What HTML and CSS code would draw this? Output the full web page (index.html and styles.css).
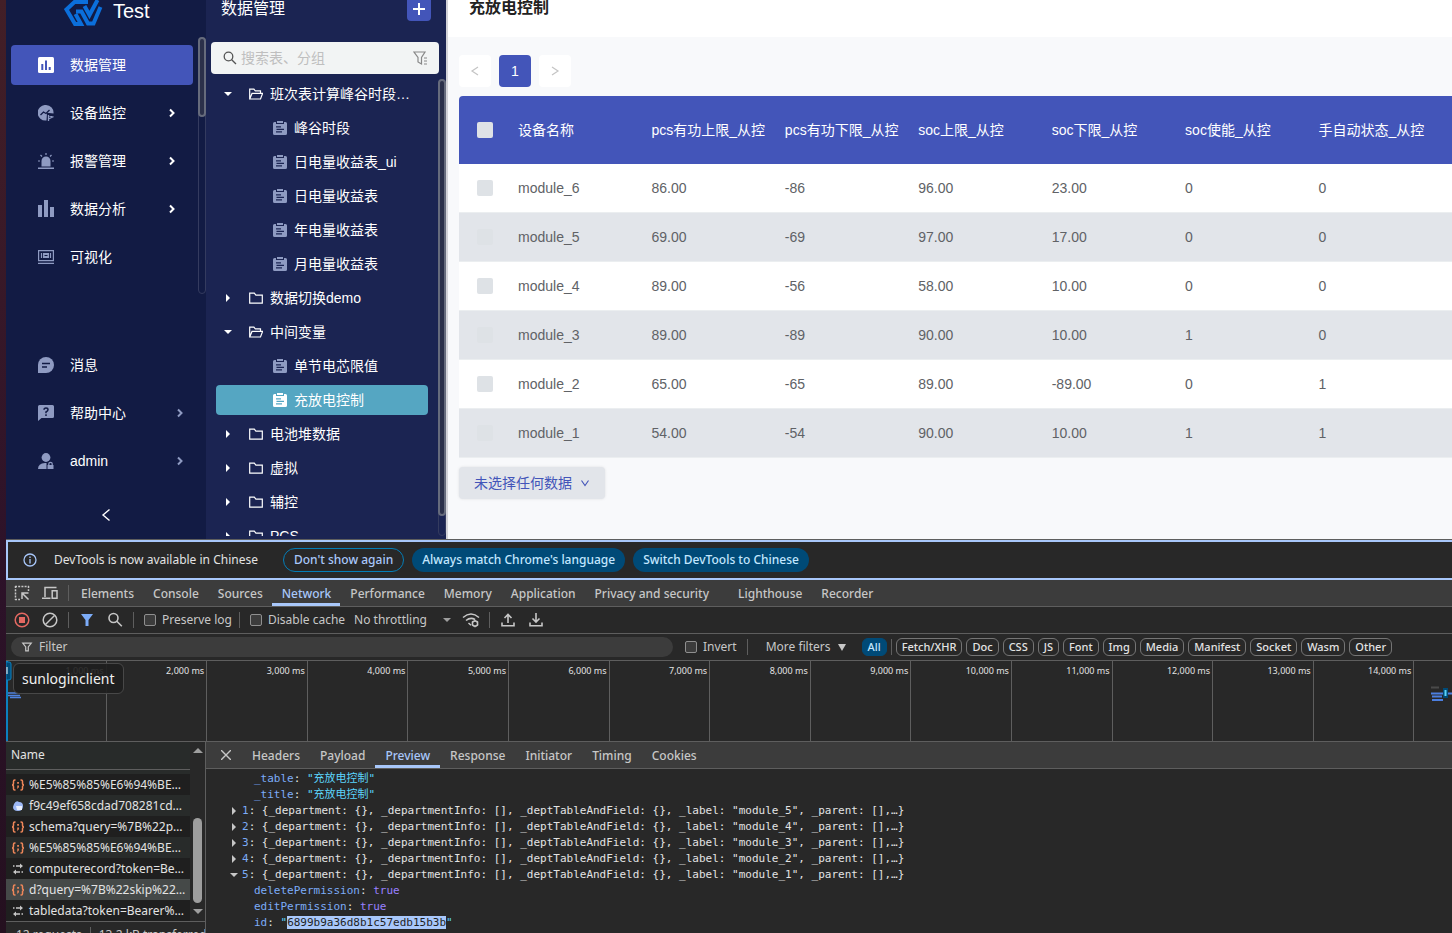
FILE: index.html
```html
<!DOCTYPE html>
<html lang="zh-CN">
<head>
    <meta charset="UTF-8">
    <title>充放电控制</title>
    <link rel="stylesheet" href="styles.css">
</head>
<body>
    <!-- 图标 -->
    <svg class="sprite" aria-hidden="true">
        <symbol id="i-folder" viewBox="0 0 14 14"><path d="M.7 2.2h4.6l1.600 1.900h6.400v8H.7z" fill="none" stroke="currentColor" stroke-width="1.200"/></symbol>
        <symbol id="i-open" viewBox="0 0 14 14"><path d="M.7 12V2.200h4.200l1.400 1.700h5.200v2.300M.7 12l2.300-5.600h10.600L11.500 12z" fill="none" stroke="currentColor" stroke-width="1.200"/></symbol>
        <symbol id="i-sheet" viewBox="0 0 14 14"><path fill="currentColor" fill-rule="evenodd" d="M1.500 1H3v2h8V1h1.500a1.500 1.500 0 0 1 1.500 1.500v10a1.500 1.500 0 0 1-1.500 1.500h-11A1.500 1.500 0 0 1 0 12.500v-10A1.500 1.500 0 0 1 1.500 1zM3 5.200v1.200h5V5.200zM3.500 7.800V9H11V7.800zM3 10.300v1.200h6v-1.200zM4 0h6v2H4z"/></symbol>
        <symbol id="i-right" viewBox="0 0 8 10"><path d="M2 1.500 5.500 5 2 8.500" fill="none" stroke="currentColor" stroke-width="2"/></symbol>
        <symbol id="i-caret" viewBox="0 0 12 12"><path d="M4 2v8l4-4z" fill="currentColor"/></symbol>
        <symbol id="i-caret-down" viewBox="0 0 12 12"><path d="M2 4h8L6 8z" fill="currentColor"/></symbol>
        <symbol id="i-json" viewBox="0 0 14 12"><path d="M4.500 1H3.800Q2.500 1 2.500 2.300V4Q2.500 6 1 6q1.500 0 1.500 2v1.700Q2.500 11 3.800 11h.7M9.500 1h.7q1.300 0 1.300 1.300V4q0 2 1.500 2-1.500 0-1.500 2v1.700q0 1.300-1.300 1.300h-.7" fill="none" stroke="#f0875a" stroke-width="1.500"/><path d="M6.200 3h1.700v1.700H6.200zM6.200 6.400h1.700v1.800L6.700 9.600h-.8l.5-1.300z" fill="#f0875a"/></symbol>
        <symbol id="i-xhr" viewBox="0 0 14 12"><path d="M5 3h4M2 3h1.500M5 9h4M10.500 9H12" stroke="#c7c7c7" stroke-width="1.300"/><path d="M9 .5 12 3 9 5.500zM5 6.500 2 9l3 2.500z" fill="#c7c7c7"/></symbol>
        <symbol id="i-filter" viewBox="0 0 14 14"><path d="M2 2.500h10L8.500 7v4.500h-3V7z" fill="none" stroke="currentColor" stroke-width="1.400"/></symbol>
    </svg>

    <div class="app">
        <aside class="sidebar">
            <div class="logo">
                <svg width="40" height="26" viewBox="0 0 40 26" fill="none" stroke="#0b6fdb" stroke-width="4"><path d="M24 2H10.500L2.500 9.500 11 24h6L11.500 14"/><path d="M12 11.500h5.500L24 23.500h5.500L36.500 7"/><path d="M20.500 6l5 9L33.500 0"/></svg>
                <span>Test</span>
            </div>
            <div class="nav-scroll">
                <nav class="nav">
                    <a href="#" class="nav-item active">
                        <svg width="16" height="16" viewBox="0 0 16 16"><rect width="16" height="16" rx="1.500" fill="#fff"/><path d="M3.300 7h2v6h-2zM7 3.500h2V13H7zM10.700 10h2v3h-2z" fill="#4355b9"/></svg>
                        <span>数据管理</span>
                    </a>
                    <a href="#" class="nav-item">
                        <svg width="16" height="16" viewBox="0 0 16 16"><path d="M8 0a7.700 7.700 0 0 1 7.500 8.500L9 7.800 8.500 15.500A7.800 7.800 0 1 1 8 0z" fill="#8f9bc2"/><path d="M2.500 10 5.500 7l2.500 1.500 3.500-3.500" fill="none" stroke="#121b44" stroke-width="1.300"/><path d="M10.500 10v6M10.500 10.500l4 1.500-4 2" fill="none" stroke="#8f9bc2" stroke-width="1.300"/></svg>
                        <span>设备监控</span>
                        <svg class="arrow" width="8" height="10"><use href="#i-right"/></svg>
                    </a>
                    <a href="#" class="nav-item">
                        <svg width="16" height="16" viewBox="0 0 16 16"><path d="M3.500 13.500V8a4.500 4.500 0 0 1 9 0v5.500zM0 14.500h16V16H0z" fill="#8f9bc2"/><path d="M8 0v2M2.500 2 4 3.500M13.500 2 12 3.500M0 8h2M14 8h2" stroke="#8f9bc2" stroke-width="1.200"/></svg>
                        <span>报警管理</span>
                        <svg class="arrow" width="8" height="10"><use href="#i-right"/></svg>
                    </a>
                    <a href="#" class="nav-item">
                        <svg width="16" height="20" viewBox="0 0 16 20"><path d="M0 6h4v12H0zM6 1h4v17H6zM12 8h4v10h-4z" fill="#8f9bc2"/></svg>
                        <span>数据分析</span>
                        <svg class="arrow" width="8" height="10"><use href="#i-right"/></svg>
                    </a>
                    <a href="#" class="nav-item">
                        <svg width="16" height="14" viewBox="0 0 16 14"><path d="M.6.6h14.800v10H.6zM0 13.300h16M3.500 3v5M12.500 3v5" fill="none" stroke="#8f9bc2" stroke-width="1.200"/><path d="M5 3h6v5H5z" fill="#8f9bc2"/><path d="M6.500 5.500h3" stroke="#121b44"/></svg>
                        <span>可视化</span>
                    </a>
                </nav>
                <div class="scrollbar"><div class="thumb thumb-nav"></div></div>
            </div>
            <div class="nav nav-bottom">
                <a href="#" class="nav-item">
                    <svg width="16" height="16" viewBox="0 0 16 16"><path d="M8 0a8 8 0 0 1 0 16H0V8a8 8 0 0 1 8-8z" fill="#8f9bc2"/><path d="M4 6.500h8M4 10h5" stroke="#121b44" stroke-width="1.500"/></svg>
                    <span>消息</span>
                </a>
                <a href="#" class="nav-item">
                    <svg width="16" height="16" viewBox="0 0 16 16"><path d="M1.500 0h13A1.500 1.500 0 0 1 16 1.500v10a1.500 1.500 0 0 1-1.500 1.500H3.500L0 16V1.500A1.500 1.500 0 0 1 1.500 0z" fill="#8f9bc2"/><path d="M6 4.800Q6 3 8 3t2 1.700Q10 6 8 7v1.200M8 9.300V11" fill="none" stroke="#121b44" stroke-width="1.500"/></svg>
                    <span>帮助中心</span>
                    <svg class="arrow" width="8" height="10"><use href="#i-right"/></svg>
                </a>
                <a href="#" class="nav-item">
                    <svg width="16" height="16" viewBox="0 0 16 16" fill="#8f9bc2"><circle cx="8" cy="4.500" r="4.400"/><path d="M0 16q0-5.500 7-6h1.500v6zM9.500 12h6v4h-6z"/><path d="M10.800 12v-1a1.700 1.700 0 0 1 3.400 0v1" fill="none" stroke="#8f9bc2" stroke-width="1.200"/></svg>
                    <span>admin</span>
                    <svg class="arrow" width="8" height="10"><use href="#i-right"/></svg>
                </a>
            </div>
            <button class="collapse" aria-label="收起"><svg width="10" height="14" viewBox="0 0 10 14"><path d="M8.500 1.500 2 7l6.500 5.500" fill="none" stroke="#fff" stroke-width="1.400"/></svg></button>
        </aside>

        <section class="tree-panel">
            <div class="tree-head">
                <span>数据管理</span>
                <button class="add-button" aria-label="新增"><svg width="12" height="12" viewBox="0 0 12 12"><path d="M6 0v12M0 6h12" stroke="#fff" stroke-width="2"/></svg></button>
            </div>
            <div class="search">
                <svg width="14" height="14" viewBox="0 0 14 14" fill="none" stroke="#555" stroke-width="1.300"><circle cx="5.500" cy="5.500" r="4.300"/><path d="M8.700 8.700 13 13"/></svg>
                <input type="text" placeholder="搜索表、分组" aria-label="搜索表、分组">
                <svg width="15" height="15" viewBox="0 0 15 15" fill="none" stroke="#888" stroke-width="1.200"><path d="M1 1h11L8.500 6.500V13L5 11V6.500zM11 7h3M11 10h3M11 13h3"/></svg>
            </div>
            <div class="tree-scroll">
                <div class="tree">
                    <a href="#" class="tree-row"><svg class="caret"><use href="#i-caret-down"/></svg><svg><use href="#i-open"/></svg><span>班次表计算峰谷时段…</span></a>
                    <a href="#" class="tree-row leaf"><svg><use href="#i-sheet"/></svg><span>峰谷时段</span></a>
                    <a href="#" class="tree-row leaf"><svg><use href="#i-sheet"/></svg><span>日电量收益表_ui</span></a>
                    <a href="#" class="tree-row leaf"><svg><use href="#i-sheet"/></svg><span>日电量收益表</span></a>
                    <a href="#" class="tree-row leaf"><svg><use href="#i-sheet"/></svg><span>年电量收益表</span></a>
                    <a href="#" class="tree-row leaf"><svg><use href="#i-sheet"/></svg><span>月电量收益表</span></a>
                    <a href="#" class="tree-row"><svg class="caret"><use href="#i-caret"/></svg><svg><use href="#i-folder"/></svg><span>数据切换demo</span></a>
                    <a href="#" class="tree-row"><svg class="caret"><use href="#i-caret-down"/></svg><svg><use href="#i-open"/></svg><span>中间变量</span></a>
                    <a href="#" class="tree-row leaf"><svg><use href="#i-sheet"/></svg><span>单节电芯限值</span></a>
                    <a href="#" class="tree-row leaf selected"><svg><use href="#i-sheet"/></svg><span>充放电控制</span></a>
                    <a href="#" class="tree-row"><svg class="caret"><use href="#i-caret"/></svg><svg><use href="#i-folder"/></svg><span>电池堆数据</span></a>
                    <a href="#" class="tree-row"><svg class="caret"><use href="#i-caret"/></svg><svg><use href="#i-folder"/></svg><span>虚拟</span></a>
                    <a href="#" class="tree-row"><svg class="caret"><use href="#i-caret"/></svg><svg><use href="#i-folder"/></svg><span>辅控</span></a>
                    <a href="#" class="tree-row"><svg class="caret"><use href="#i-caret"/></svg><svg><use href="#i-folder"/></svg><span>PCS</span></a>
                </div>
                <div class="scrollbar"><div class="thumb thumb-tree"></div></div>
            </div>
        </section>

        <main class="content">
            <h1 class="page-title">充放电控制</h1>
            <div class="content-body">
                <div class="pager">
                    <button disabled aria-label="上一页"><svg width="10" height="12" viewBox="0 0 10 12"><path d="M8 2 2 6l6 4" fill="none" stroke="#c4c4c4" stroke-width="1.200"/></svg></button>
                    <button class="current">1</button>
                    <button disabled aria-label="下一页"><svg width="10" height="12" viewBox="0 0 10 12"><path d="m2 2 6 4-6 4" fill="none" stroke="#c4c4c4" stroke-width="1.200"/></svg></button>
                </div>
                <table class="data-table">
                    <colgroup><col class="col-check"><col span="7"><col class="col-end"></colgroup>
                    <thead>
                        <tr><th><input type="checkbox" aria-label="全选"></th><th>设备名称</th><th>pcs有功上限_从控</th><th>pcs有功下限_从控</th><th>soc上限_从控</th><th>soc下限_从控</th><th>soc使能_从控</th><th>手自动状态_从控</th><th></th></tr>
                    </thead>
                    <tbody>
                        <tr><td><input type="checkbox" aria-label="module_6"></td><td>module_6</td><td>86.00</td><td>-86</td><td>96.00</td><td>23.00</td><td>0</td><td>0</td><td></td></tr>
                        <tr><td><input type="checkbox" aria-label="module_5"></td><td>module_5</td><td>69.00</td><td>-69</td><td>97.00</td><td>17.00</td><td>0</td><td>0</td><td></td></tr>
                        <tr><td><input type="checkbox" aria-label="module_4"></td><td>module_4</td><td>89.00</td><td>-56</td><td>58.00</td><td>10.00</td><td>0</td><td>0</td><td></td></tr>
                        <tr><td><input type="checkbox" aria-label="module_3"></td><td>module_3</td><td>89.00</td><td>-89</td><td>90.00</td><td>10.00</td><td>1</td><td>0</td><td></td></tr>
                        <tr><td><input type="checkbox" aria-label="module_2"></td><td>module_2</td><td>65.00</td><td>-65</td><td>89.00</td><td>-89.00</td><td>0</td><td>1</td><td></td></tr>
                        <tr><td><input type="checkbox" aria-label="module_1"></td><td>module_1</td><td>54.00</td><td>-54</td><td>90.00</td><td>10.00</td><td>1</td><td>1</td><td></td></tr>
                    </tbody>
                </table>
                <button class="batch-button">未选择任何数据 <svg width="10" height="10" viewBox="0 0 10 10"><path d="m1.500 2.500 3.500 5 3.500-5" fill="none" stroke="#4355b9" stroke-width="1.100"/></svg></button>
            </div>
        </main>
    </div>

    <div class="devtools">
        <div class="infobar">
            <svg width="14" height="14" viewBox="0 0 14 14" fill="none" stroke="#a8c7fa" stroke-width="1.300"><circle cx="7" cy="7" r="6"/><path d="M7 6v4.500M7 3.500V5"/></svg>
            <span class="infobar-text">DevTools is now available in Chinese</span>
            <button class="pill outline">Don't show again</button>
            <button class="pill">Always match Chrome's language</button>
            <button class="pill">Switch DevTools to Chinese</button>
        </div>

        <div class="tabbar main-tabs">
            <button class="icon-button" aria-label="Inspect"><svg width="16" height="16" viewBox="0 0 16 16" fill="none" stroke="#c7c7c7" stroke-width="1.500"><path d="M1.500 1v14M1 1.500h14M14.500 1v5M1 14.500h5" stroke-dasharray="2 1.200"/><path d="M14.500 14.500 8.500 8.500M8 14V8h6.500"/></svg></button>
            <button class="icon-button" aria-label="Device toolbar"><svg width="16" height="14" viewBox="0 0 16 14" fill="none" stroke="#c7c7c7" stroke-width="1.500"><path d="M3 11V1.500h11.500M0 12.200h8.500M10.200 4.700h4.800v7.500h-4.800z"/></svg></button>
            <span class="divider"></span>
            <a href="#" class="tab">Elements</a>
            <a href="#" class="tab">Console</a>
            <a href="#" class="tab">Sources</a>
            <a href="#" class="tab on">Network</a>
            <a href="#" class="tab">Performance</a>
            <a href="#" class="tab">Memory</a>
            <a href="#" class="tab">Application</a>
            <a href="#" class="tab wide">Privacy and security</a>
            <a href="#" class="tab">Lighthouse</a>
            <a href="#" class="tab">Recorder</a>
        </div>

        <div class="toolbar">
            <button class="icon-button" aria-label="Record"><svg width="16" height="16" viewBox="0 0 16 16"><circle cx="8" cy="8" r="6.800" fill="none" stroke="#e46962" stroke-width="1.500"/><path d="M5 5h6v6H5z" fill="#e46962"/></svg></button>
            <button class="icon-button" aria-label="Clear"><svg width="16" height="16" viewBox="0 0 16 16" fill="none" stroke="#c7c7c7" stroke-width="1.500"><circle cx="8" cy="8" r="6.800"/><path d="m3.500 12.500 9-9"/></svg></button>
            <span class="divider"></span>
            <button class="icon-button" aria-label="Filter"><svg width="14" height="14" viewBox="0 0 14 14"><path d="M1 1h12L8.500 7v6h-3V7z" fill="#7cacf8"/></svg></button>
            <button class="icon-button" aria-label="Search"><svg width="16" height="16" viewBox="0 0 16 16" fill="none" stroke="#c7c7c7" stroke-width="1.600"><circle cx="6.500" cy="6" r="4.500"/><path d="m9.800 9.300 5 5"/></svg></button>
            <span class="divider"></span>
            <label class="check"><input type="checkbox"> Preserve log</label>
            <span class="divider"></span>
            <label class="check"><input type="checkbox"> Disable cache</label>
            <div class="throttle">
                <select aria-label="Throttling"><option>No throttling</option></select>
                <svg width="8" height="4" viewBox="0 0 8 4"><path d="M0 0h8L4 4z" fill="#9e9e9e"/></svg>
            </div>
            <button class="icon-button" aria-label="Network conditions"><svg width="18" height="16" viewBox="0 0 18 16" fill="none" stroke="#c7c7c7" stroke-width="1.500"><path d="M1 5.500Q9-1.500 17 5.500M4 8.500q4.500-3.700 9-1M6.500 11 9 13.200"/><circle cx="13" cy="11.500" r="2.600"/><path d="M13 7.800v1.200M13 14v1.200M9.800 9.700l1 .5M15.200 12.800l1 .6M16.200 9.700l-1 .5M10.800 12.800l-1 .6"/></svg></button>
            <span class="divider"></span>
            <button class="icon-button" aria-label="Import"><svg width="14" height="14" viewBox="0 0 14 14" fill="none" stroke="#c7c7c7" stroke-width="1.600"><path d="M7 10V1.500M3.500 5 7 1.500 10.500 5M1 9.500v3.300h12V9.500"/></svg></button>
            <button class="icon-button" aria-label="Export"><svg width="14" height="14" viewBox="0 0 14 14" fill="none" stroke="#c7c7c7" stroke-width="1.600"><path d="M7 0v9M3.500 5.500 7 9l3.500-3.500M1 9.500v3.300h12V9.500"/></svg></button>
        </div>

        <div class="toolbar filterbar">
            <div class="filter-field">
                <svg width="12" height="12"><use href="#i-filter"/></svg>
                <input type="text" placeholder="Filter" aria-label="Filter">
            </div>
            <label class="check invert"><input type="checkbox"> Invert</label>
            <span class="divider"></span>
            <button class="more">More filters <svg width="8" height="7" viewBox="0 0 8 7"><path d="M0 0h8L4 7z" fill="#c7c7c7"/></svg></button>
            <button class="chip on">All</button>
            <span class="divider"></span>
            <button class="chip">Fetch/XHR</button>
            <button class="chip">Doc</button>
            <button class="chip">CSS</button>
            <button class="chip">JS</button>
            <button class="chip">Font</button>
            <button class="chip">Img</button>
            <button class="chip">Media</button>
            <button class="chip">Manifest</button>
            <button class="chip">Socket</button>
            <button class="chip">Wasm</button>
            <button class="chip">Other</button>
        </div>

        <div class="timeline">
            <span>1,000 ms</span><span>2,000 ms</span><span>3,000 ms</span><span>4,000 ms</span><span>5,000 ms</span><span>6,000 ms</span><span>7,000 ms</span><span>8,000 ms</span><span>9,000 ms</span><span>10,000 ms</span><span>11,000 ms</span><span>12,000 ms</span><span>13,000 ms</span><span>14,000 ms</span>
            <svg class="marks-start" width="16" height="80" viewBox="0 0 16 80"><path d="M0 0h2v80H0z" fill="#0b80c0"/><path d="M0 1h3q2 0 2 2v14q0 2-2 2H0z" fill="#004a77" stroke="#0b80c0"/><path d="M1 6v7" stroke="#fff"/><path d="M2 32h10M2 34.500h12M4 36.500h11" fill="none" stroke="#4f83e0" stroke-width="1.500"/></svg>
            <svg class="marks-end" width="22" height="16" viewBox="0 0 22 16"><path d="M1 1.500h8" stroke="#4a4a4a" stroke-width="2"/><path d="M1 7.500h21M2 10.500h10M2 14h11" stroke="#4c7fe0" stroke-width="2"/><path d="M13 2h5v10h-5z" fill="#004a77"/><path d="M15.500 4v6" stroke="#5cd5fb" stroke-width="2"/></svg>
            <div class="tooltip">sunloginclient</div>
        </div>

        <div class="details">
            <div class="requests">
                <div class="requests-main">
                    <table class="request-table">
                        <thead><tr><th>Name</th></tr></thead>
                        <tbody>
                            <tr class="cut"><td></td></tr>
                            <tr><td><svg><use href="#i-json"/></svg>%E5%85%85%E6%94%BE%E7%94%B5</td></tr>
                            <tr><td><svg viewBox="0 0 14 12"><path d="M3 4Q5 0 8 2q4 0 4 4 0 5-5 5-5 0-5-4z" fill="#9db8f5"/><path d="M5 6h6v4H6z" fill="#e8eefc"/></svg>f9c49ef658cdad708281cd08</td></tr>
                            <tr><td><svg><use href="#i-json"/></svg>schema?query=%7B%22project</td></tr>
                            <tr><td><svg><use href="#i-json"/></svg>%E5%85%85%E6%94%BE%E7%94%B5</td></tr>
                            <tr><td><svg><use href="#i-xhr"/></svg>computerecord?token=Bearer</td></tr>
                            <tr class="picked"><td><svg><use href="#i-json"/></svg>d?query=%7B%22skip%22%3A0</td></tr>
                            <tr><td><svg><use href="#i-xhr"/></svg>tabledata?token=Bearer%20</td></tr>
                        </tbody>
                    </table>
                    <div class="list-scroll">
                        <svg width="10" height="5" viewBox="0 0 10 5"><path d="M0 5h10L5 0z" fill="#9e9e9e"/></svg>
                        <div class="list-thumb"></div>
                        <svg width="10" height="5" viewBox="0 0 10 5"><path d="M0 0h10L5 5z" fill="#9e9e9e"/></svg>
                    </div>
                </div>
                <div class="status"><span>12 requests</span><span>13.2 kB transferred</span></div>
            </div>
            <div class="preview">
                <div class="tabbar">
                    <button class="close" aria-label="Close"><svg width="10" height="10" viewBox="0 0 10 10"><path d="m0 0 10 10M10 0 0 10" stroke="#c7c7c7" stroke-width="1.400"/></svg></button>
                    <a href="#" class="tab">Headers</a>
                    <a href="#" class="tab">Payload</a>
                    <a href="#" class="tab on">Preview</a>
                    <a href="#" class="tab">Response</a>
                    <a href="#" class="tab">Initiator</a>
                    <a href="#" class="tab">Timing</a>
                    <a href="#" class="tab">Cookies</a>
                </div>
                <div class="json">
                    <div class="line prop"><b>_state</b></div>
                    <div class="line prop"><b>_table</b>: <i>"充放电控制"</i></div>
                    <div class="line prop"><b>_title</b>: <i>"充放电控制"</i></div>
                    <div class="line"><svg><use href="#i-caret"/></svg><b>1</b>: {_department: {}, _departmentInfo: [], _deptTableAndField: {}, _label: "module_5", _parent: [],…}</div>
                    <div class="line"><svg><use href="#i-caret"/></svg><b>2</b>: {_department: {}, _departmentInfo: [], _deptTableAndField: {}, _label: "module_4", _parent: [],…}</div>
                    <div class="line"><svg><use href="#i-caret"/></svg><b>3</b>: {_department: {}, _departmentInfo: [], _deptTableAndField: {}, _label: "module_3", _parent: [],…}</div>
                    <div class="line"><svg><use href="#i-caret"/></svg><b>4</b>: {_department: {}, _departmentInfo: [], _deptTableAndField: {}, _label: "module_2", _parent: [],…}</div>
                    <div class="line"><svg><use href="#i-caret-down"/></svg><b>5</b>: {_department: {}, _departmentInfo: [], _deptTableAndField: {}, _label: "module_1", _parent: [],…}</div>
                    <div class="line prop"><b>deletePermission</b>: <em>true</em></div>
                    <div class="line prop"><b>editPermission</b>: <em>true</em></div>
                    <div class="line prop"><b>id</b>: <i>"<mark>6899b9a36d8b1c57edb15b3b</mark>"</i></div>
                </div>
            </div>
        </div>
    </div>
</body>
</html>
```
FILE: styles.css
```css
* {
    box-sizing: border-box;
}

body {
    margin: 0;
    padding-left: 6px;
    height: 100vh;
    display: flex;
    flex-direction: column;
    overflow: hidden;
    background: linear-gradient(#431f27, #2d1229 60%, #24101f);
    font-family: "Liberation Sans", "Noto Sans CJK SC", sans-serif;
    font-size: 14px;
    line-height: 20px;
}

a {
    color: inherit;
    text-decoration: none;
}

button {
    font: inherit;
    color: inherit;
    border: none;
    background: none;
    padding: 0;
    cursor: pointer;
    display: flex;
    align-items: center;
    justify-content: center;
}

svg {
    flex: none;
}

.sprite {
    display: none;
}

.app {
    flex: 1;
    min-height: 0;
    display: flex;
    background-color: #f8f9fb;
    color: #fff;
}

/* 左侧菜单 */
.sidebar {
    width: 200px;
    flex: none;
    display: flex;
    flex-direction: column;
    background-color: #121b44;
}

.logo {
    display: flex;
    gap: 9px;
    height: 37px;
    padding-left: 58px;
    font-size: 20px;
    line-height: 23px;
}

.nav-scroll {
    flex: 1;
    min-height: 0;
    display: flex;
    justify-content: space-between;
}

.nav {
    width: 182px;
    margin-left: 5px;
    padding-top: 8px;
    display: flex;
    flex-direction: column;
    gap: 8px;
}

.nav-item {
    display: flex;
    align-items: center;
    gap: 16px;
    height: 40px;
    padding: 0 17px 0 27px;
    border-radius: 4px;
}

.nav-item.active {
    background-color: #4355b9;
}

.arrow {
    margin-left: auto;
}

.nav-bottom {
    padding-top: 51px;
}

.nav-bottom .nav-item {
    padding-right: 9px;
}

.nav-bottom .arrow {
    color: #8f9bc2;
}

.collapse {
    height: 58px;
    padding-top: 10px;
}

.scrollbar {
    width: 8px;
    border: 1px solid #343b5f;
    border-radius: 4px;
}

.thumb {
    width: 8px;
    margin: -1px;
    border: 2px solid #666b7c;
    border-radius: 4px;
    background-color: #2b304a;
}

.thumb-nav {
    height: 80px;
}

.thumb-tree {
    height: 96%;
}

/* 表格树 */
.tree-panel {
    width: 240px;
    flex: none;
    display: flex;
    flex-direction: column;
    background-color: #1b2452;
}

.tree-head {
    display: flex;
    justify-content: space-between;
    height: 42px;
    padding: 0 15px;
    font-size: 16px;
    line-height: 18px;
}

.add-button {
    width: 24px;
    height: 21px;
    padding-bottom: 3px;
    border-radius: 0 0 4px 4px;
    background-color: #4355b9;
}

.search {
    display: flex;
    align-items: center;
    gap: 4px;
    height: 32px;
    margin: 0 7px 0 5px;
    padding: 0 11px 0 12px;
    border-radius: 4px;
    background-color: #f2f4f4;
}

.search input {
    flex: 1;
    min-width: 0;
    padding: 0;
    border: none;
    outline: none;
    background: none;
    font: inherit;
}

.search input::placeholder {
    color: #bfbfbf;
}

.tree-scroll {
    flex: 1;
    min-height: 0;
    display: flex;
    justify-content: space-between;
    padding: 3px 0;
    overflow: hidden;
}

.tree-scroll .scrollbar {
    margin-top: 2px;
}

.tree {
    width: 212px;
    margin-left: 10px;
    overflow: hidden;
}

.tree-row {
    display: flex;
    align-items: center;
    gap: 7px;
    height: 30px;
    margin: 2px 0 4px;
    padding-left: 6px;
    border-radius: 4px;
    white-space: nowrap;
}

.tree-row svg {
    width: 14px;
    height: 14px;
}

.tree-row .caret {
    width: 12px;
    height: 12px;
    margin-right: 8px;
}

.tree-row.leaf {
    padding-left: 57px;
}

.leaf svg {
    color: #8f9bc2;
}

.tree-row.selected {
    background-color: #55a6c2;
}

.selected svg {
    color: #fff;
}

/* 数据内容 */
.content {
    flex: 1;
    min-width: 0;
    border-left: 2px solid #d3d3d8;
    color: #606266;
}

.page-title {
    height: 37px;
    margin: 0;
    padding-left: 21px;
    background-color: #fff;
    color: #222;
    font-size: 16px;
    line-height: 16px;
}

.content-body {
    padding: 18px 0 0 11px;
}

.pager {
    display: flex;
    gap: 8px;
    margin-bottom: 9px;
}

.pager button {
    width: 32px;
    height: 32px;
    border-radius: 4px;
    background-color: #fff;
}

.pager .current {
    background-color: #4355b9;
    color: #fff;
}

.data-table {
    width: 100%;
    table-layout: fixed;
    border-spacing: 0;
}

.col-check {
    width: 51px;
}

.col-end {
    width: 8px;
}

.data-table th,
.data-table td {
    height: 49px;
    padding: 0 0 0 8px;
    text-align: left;
    font-weight: normal;
    white-space: nowrap;
}

.data-table th {
    height: 68px;
    background-color: #4355b9;
    color: #fff;
}

.data-table th:first-child {
    border-top-left-radius: 4px;
}

.data-table th:first-child,
.data-table td:first-child {
    padding-left: 18px;
}

.data-table td {
    border-bottom: 1px solid #ebeef0;
    background-color: #fff;
}

.data-table tr:nth-child(even) td {
    background-color: #e2e5ea;
}

.data-table input {
    appearance: none;
    display: block;
    width: 16px;
    height: 16px;
    margin: 0;
    border-radius: 2px;
    background-color: #dee2e6;
}

.batch-button {
    gap: 8px;
    height: 32px;
    margin-top: 9px;
    padding: 0 15px;
    border-radius: 4px;
    background-color: #e2e5ea;
    box-shadow: 0 0 3px rgba(0, 0, 0, 0.1);
    color: #4355b9;
}

/* DevTools */
.devtools {
    flex: none;
    background-color: #282828;
    color: #c7c7c7;
    font-family: "Noto Sans", sans-serif;
    font-size: 12px;
    border-top: 1px solid #5e5e5e;
}

.infobar {
    display: flex;
    align-items: center;
    gap: 8px;
    height: 40px;
    padding-left: 15px;
    border: 2px solid #a8c7fa;
    border-right: none;
    color: #e3e3e3;
}

.infobar-text {
    margin: 0 17px 0 9px;
}

.pill {
    height: 24px;
    padding: 0 10px;
    border-radius: 12px;
    background-color: #004a77;
    color: #c2e7ff;
    font-weight: 500;
}

.pill.outline {
    border: 1px solid #047db7;
    background: none;
    color: #a8c7fa;
}

.tabbar {
    display: flex;
    align-items: center;
    height: 27px;
    border-bottom: 1px solid #5e5e5e;
    background-color: #3c3c3c;
}

.tab {
    height: 26px;
    padding: 0 10px;
    line-height: 28px;
    font-weight: 500;
}

.main-tabs .tab {
    padding-right: 9px;
}

.tab.on {
    color: #a8c7fa;
    box-shadow: inset 0 -3px 0 #a8c7fa;
}

.main-tabs .wide {
    margin-right: 10px;
}

.toolbar {
    display: flex;
    align-items: center;
    height: 27px;
    border-bottom: 1px solid #5e5e5e;
}

.icon-button {
    width: 28px;
    height: 24px;
}

.main-tabs,
.toolbar {
    padding-left: 2px;
}

.divider {
    width: 1px;
    height: 16px;
    margin: 0 4px;
    background-color: #5e5e5e;
}

.main-tabs .divider {
    margin-right: 2px;
}

.check {
    display: flex;
    align-items: center;
    gap: 6px;
    margin: 0 3px 0 6px;
}

.check input {
    appearance: none;
    width: 12px;
    height: 12px;
    margin: 0;
    border: 1px solid #8f8f8f;
    border-radius: 2px;
    background-color: #3c3c3c;
}

.throttle {
    position: relative;
    width: 97px;
    margin: 0 6px;
}

.throttle select {
    appearance: none;
    display: block;
    width: 100%;
    padding: 0;
    border: none;
    background: none;
    color: inherit;
    font: inherit;
}

.throttle svg {
    position: absolute;
    right: 0;
    top: 8px;
}

.filterbar {
    padding-left: 5px;
}

.filter-field {
    display: flex;
    align-items: center;
    gap: 6px;
    width: 662px;
    height: 20px;
    padding-left: 10px;
    border-radius: 10px;
    background-color: #3c3c3c;
}

.filter-field input {
    flex: 1;
    padding: 0;
    border: none;
    background: none;
    font: inherit;
}

.filter-field input::placeholder {
    color: #c7c7c7;
}

.check.invert {
    margin: 0 6px 0 12px;
}

.more {
    gap: 7px;
    margin: 0 16px 0 14px;
}

.chip {
    height: 18px;
    margin-right: 4px;
    padding: 0 5px;
    border: 1px solid #757575;
    border-radius: 6px;
    color: #e3e3e3;
    font-size: 11px;
    font-weight: 500;
}

.chip.on {
    margin-right: 0;
    border-color: #004a77;
    background-color: #004a77;
    color: #c2e7ff;
}

.timeline {
    position: relative;
    display: grid;
    grid-template-columns: repeat(14, 8fr) 3fr;
    height: 81px;
    border-bottom: 1px solid #5e5e5e;
}

.timeline span {
    padding: 4px 2px 0 0;
    border-right: 1px solid #5e5e5e;
    text-align: right;
    font-size: 9px;
    line-height: 12px;
    color: #e3e3e3;
}

.marks-start {
    position: absolute;
    left: 0;
    top: 0;
}

.marks-end {
    position: absolute;
    right: 0;
    top: 25px;
}

.tooltip {
    position: absolute;
    left: 7px;
    top: 2px;
    height: 31px;
    padding: 0 8px;
    border: 1px solid #484848;
    border-radius: 6px;
    background-color: rgba(30, 30, 30, 0.9);
    color: #f0f0f0;
    font-size: 14px;
    line-height: 29px;
}

.details {
    display: flex;
    height: 191px;
}

.requests {
    width: 200px;
    flex: none;
    border-right: 1px solid #5e5e5e;
}

.requests-main {
    display: flex;
    height: 180px;
    border-bottom: 1px solid #5e5e5e;
}

.request-table {
    width: 184px;
    table-layout: fixed;
    border-collapse: collapse;
}

.request-table th,
.request-table td {
    height: 21px;
    padding: 0 4px 0 5px;
    text-align: left;
    font-weight: normal;
    white-space: nowrap;
    overflow: hidden;
    text-overflow: ellipsis;
    color: #e3e3e3;
}

.request-table th {
    height: 27px;
    border-bottom: 1px solid #5e5e5e;
    background-color: #282b2a;
}

.request-table tbody tr {
    background-color: #1f1f1f;
}

.request-table tbody tr:nth-child(odd) {
    background-color: #282b2a;
}

.request-table tbody tr.picked:nth-child(odd) {
    background-color: #454948;
}

.request-table .cut td {
    height: 5px;
}

.request-table svg {
    width: 14px;
    height: 12px;
    margin-right: 4px;
    vertical-align: -2px;
}

.list-scroll {
    flex: 1;
    display: flex;
    flex-direction: column;
    align-items: center;
    padding: 6px 0 7px;
}

.list-thumb {
    width: 9px;
    height: 85px;
    margin: auto 0 6px;
    border-radius: 5px;
    background-color: #9e9e9e;
}

.status {
    display: flex;
    height: 11px;
    padding: 5px 0 0 10px;
    overflow: hidden;
    white-space: nowrap;
    line-height: 16px;
}

.status span + span {
    margin-left: 8px;
    padding-left: 8px;
    border-left: 1px solid #5e5e5e;
}

.preview {
    flex: 1;
    min-width: 0;
    display: flex;
    flex-direction: column;
}

.close {
    width: 36px;
    padding-left: 4px;
}

.json {
    flex: 1;
    overflow: hidden;
    color: #e3e3e3;
    font: 11px/16px "DejaVu Sans Mono", "Noto Sans CJK SC", monospace;
}

.line {
    height: 16px;
    padding-left: 22px;
    white-space: pre;
}

.line:first-child {
    margin-top: -14px;
}

.line.prop {
    padding-left: 48px;
}

.line svg {
    width: 12px;
    height: 12px;
    margin-right: 2px;
    vertical-align: -3px;
    color: #c7c7c7;
}

.line b {
    color: #7cacf8;
    font-weight: normal;
}

.line i {
    color: #5cd5fb;
    font-style: normal;
}

.line em {
    color: #9980ff;
    font-style: normal;
}

.line mark {
    background-color: #a8c7fa;
    color: #1f1f1f;
}
```
